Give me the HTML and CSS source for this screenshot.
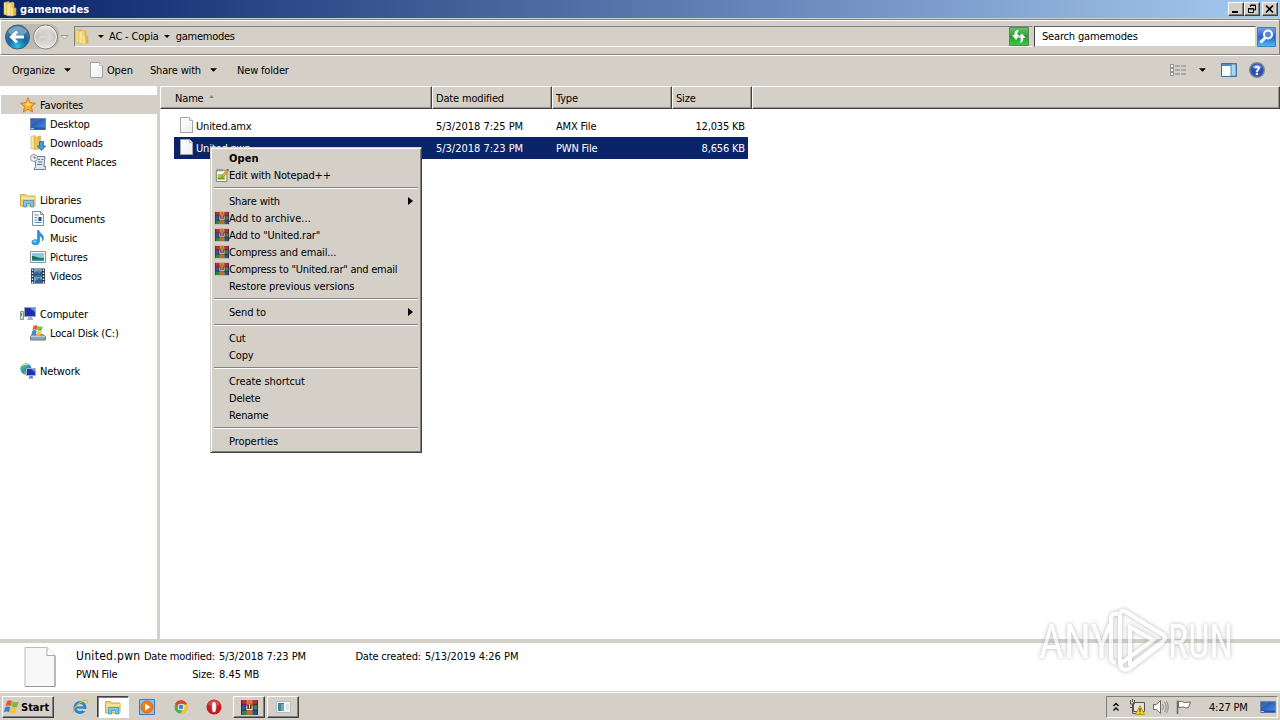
FILE: index.html
```html
<!DOCTYPE html>
<html lang="en">
<head>
  <meta charset="UTF-8">
  <meta name="viewport" content="width=device-width, initial-scale=1.0">
  <title>gamemodes</title>
  <link rel="stylesheet" href="styles.css">
</head>
<body>
  <svg class="sprites" width="0" height="0">
    <defs>
      <linearGradient id="gold" x1="0" x2="1"><stop offset="0" stop-color="#fff3a8"/><stop offset="1" stop-color="#d9ad35"/></linearGradient>
      <linearGradient id="screen" x1="0" y1="0" x2="1" y2="1"><stop offset="0" stop-color="#173f9c"/><stop offset="1" stop-color="#4a95e6"/></linearGradient>
      <linearGradient id="paper" x1="0" y1="0" x2="1" y2="1"><stop offset="0" stop-color="#fff"/><stop offset="1" stop-color="#eee"/></linearGradient>
      <radialGradient id="back" cx=".5" cy=".9" r=".8"><stop offset="0" stop-color="#2fc3ec"/><stop offset=".5" stop-color="#1268a6"/><stop offset="1" stop-color="#4a7ca5"/></radialGradient>
      <linearGradient id="forward" x1="0" y1="0" x2="0" y2="1"><stop offset="0" stop-color="#e9e7e3"/><stop offset=".5" stop-color="#c6c3be"/><stop offset="1" stop-color="#ebe9e6"/></linearGradient>
      <linearGradient id="green" x1="0" y1="0" x2="0" y2="1"><stop offset="0" stop-color="#6cc46c"/><stop offset=".5" stop-color="#2b9a35"/><stop offset="1" stop-color="#37ce3c"/></linearGradient>
      <linearGradient id="blue" x1="0" y1="0" x2="0" y2="1"><stop offset="0" stop-color="#7d9de8"/><stop offset=".5" stop-color="#2b62c9"/><stop offset="1" stop-color="#45c2f5"/></linearGradient>
    </defs>
    <symbol id="i-folder" viewBox="0 0 16 16">
      <path d="M2 1.500l5-1v14l-5-1z" fill="url(#gold)" stroke="#c9a640" stroke-width=".6"/>
      <path d="M5 2.500l6-1.500 1 1v5h2v7l-4 1-5-.5z" fill="url(#gold)" stroke="#d5b04a" stroke-width=".6"/>
      <path d="M10 7v8" stroke="#fff6c0"/>
    </symbol>
    <symbol id="i-file" viewBox="0 0 16 16">
      <path d="M2.500.5h9l3 3v12h-12z" fill="url(#paper)" stroke="#a3a3a3"/>
      <path d="M11.500.5v3h3" fill="#fff" stroke="#b5b5b5"/>
    </symbol>
    <symbol id="i-star" viewBox="0 0 16 16">
      <path d="M8 .8l2.100 4.900 5.300.5-4 3.500 1.200 5.300L8 12.200 3.400 15l1.200-5.300-4-3.500 5.300-.5z" fill="#ffb52e" stroke="#d9771b"/>
      <path d="M8 3.500l1.200 3.200 3 .3-4.200 1.500-3.500-1.400 2.500-.4z" fill="#ffe58e"/>
    </symbol>
    <symbol id="i-desktop" viewBox="0 0 16 16">
      <path d="M.5 2.500h15v11H.5z" fill="url(#screen)" stroke="#6d87ad"/>
      <path d="M1 11.500h14v2H1z" fill="#24539f"/><path d="M1 12h3v1H1z" fill="#9ed2f4"/>
      <path d="M1 3l9 0-9 6z" fill="#fff" opacity=".12"/>
    </symbol>
    <symbol id="i-downloads" viewBox="0 0 16 16">
      <path d="M1 1.500l4-1v14l-4-1zM4.500 2.500l6-1.500v13l-6 .5z" fill="url(#gold)" stroke="#cda83f" stroke-width=".6"/>
      <path d="M9.500 6.500h4V11h2.200l-4.200 4.500L7.300 11h2.200z" fill="#3e9de0" stroke="#1c65aa" stroke-width=".8"/>
    </symbol>
    <symbol id="i-recent" viewBox="0 0 16 16">
      <path d="M5.500 2.500h9.500l-1 10h1.500v3H4l1.500-3z" fill="#dfe7ec" stroke="#6f8290"/>
      <path d="M8 5.500h2M11.500 5.500h2M8 8h4.500M7 10.500h5" stroke="#56799a"/>
      <circle cx="4" cy="4" r="3.500" fill="#f4f6f7" stroke="#8c979f"/><path d="M4 2v2h2" fill="none" stroke="#52708c"/>
    </symbol>
    <symbol id="i-libraries" viewBox="0 0 16 16">
      <path d="M.5 2.500h5l1 1.500h8.500v10H.5z" fill="#f3d672" stroke="#cda948"/>
      <path d="M1 6h14" stroke="#fff3b7"/>
      <path d="M3.500 15V8.500h10V15h-3v-3.500h-4V15z" fill="#7cc7eb" stroke="#3d91c5" stroke-width=".8"/>
    </symbol>
    <symbol id="i-documents" viewBox="0 0 16 16">
      <path d="M2.500.5h8l3 3v11h-11z" fill="#f7fafc" stroke="#7e8f9c"/><path d="M10.500.5v3h3" fill="none" stroke="#7e8f9c"/>
      <path d="M4.500 4h4M4.500 6.500h3M4.500 9h3M4.500 11.500h7" stroke="#6390bf"/><path d="M8.500 6h3v4h-3z" fill="#264f8a"/>
    </symbol>
    <symbol id="i-music" viewBox="0 0 16 16">
      <path d="M7.500 12V.5h1.500c.5 3 4 3.500 4.500 7 .2 1.500-.5 3-1 3.500.3-3-1-4.500-3-5V12z" fill="#3390d5" stroke="#1a6cae" stroke-width=".5"/>
      <ellipse cx="5.500" cy="12.300" rx="3.900" ry="3" fill="#329bdf"/><ellipse cx="4.800" cy="11.500" rx="1.800" ry="1" fill="#87d1f4"/>
    </symbol>
    <symbol id="i-pictures" viewBox="0 0 16 16">
      <path d="M.5 2.500h15v11H.5z" fill="#fff" stroke="#8996a0"/><path d="M2 4h12v8H2z" fill="#83c9ed"/>
      <path d="M2 7c4 0 6 2.500 12 2v3H2z" fill="#246c58"/><path d="M2 10.500h12V12H2z" fill="#3b97b4"/>
    </symbol>
    <symbol id="i-videos" viewBox="0 0 16 16">
      <path d="M1 .5h14v15H1z" fill="#263542"/><path d="M4 1h8v6.500H4zM4 8.500h8V15H4z" fill="#5eaade"/>
      <path d="M4 5l3-2 2 2 3-2v4.500H4zM5 13l4-3 3 2v3H5z" fill="#315f93"/><path d="M8 2h2v2H8zM6 10h2v2H6z" fill="#b5684c"/>
      <path d="M2.500 1.500v14M13.500 1.500v14" stroke="#fff" stroke-width="1.400" stroke-dasharray="1.500 1.500"/>
    </symbol>
    <symbol id="i-computer" viewBox="0 0 16 16">
      <path d="M.5 5.500h3v8h-3z" fill="#dbe4d8" stroke="#849181"/><path d="M1.500 7v3" stroke="#49a343"/>
      <path d="M4.500 1.500h11v9h-11z" fill="#1b2fb0" stroke="#98a7ba"/><path d="M10 2h5v4z" fill="#6f8df1"/>
      <path d="M8.500 11h3.500l1.500 3H7z" fill="#a7b1bc"/>
    </symbol>
    <symbol id="i-disk" viewBox="0 0 16 16">
      <path d="M2.500 9.500h10l3 2v3.500H.5v-3.500z" fill="#8ba7b5" stroke="#617986"/><path d="M1 11.500h14" stroke="#b9cfda"/><path d="M11 13.500h3" stroke="#64d34b"/>
      <path d="M3.500 1q2.200-1.500 4.400 0l-1 4q-2-1-4.400 0z" fill="#e8592b"/><path d="M8.300 1.300q2 1 4.400 0l-1 4q-2 1-4.400 0z" fill="#78b83b"/>
      <path d="M2.300 5.700q2-1.200 4.400 0l-1 4q-2-1-4.400 0z" fill="#3f89d4"/><path d="M7.100 6q2 1 4.400 0l-1 4q-2 1-4.400 0z" fill="#f6c337"/>
    </symbol>
    <symbol id="i-network" viewBox="0 0 16 16">
      <circle cx="6" cy="6" r="5.500" fill="#2e8ed0"/><path d="M2 2.500C4 0 7 0 8 1L6.500 4 3 6 1 8C0 6 .500 4 2 2.500zM4 8l3 0v3.500L4 11z" fill="#54b65a"/><path d="M2 3q3-3 6-1" stroke="#c2eef5" fill="none"/>
      <path d="M6.500 5.500h9v7h-9z" fill="#1b35b8" stroke="#a5b2c1"/><path d="M11 6h4v3z" fill="#718cf0"/><path d="M9.500 13h3l1 2.500h-5z" fill="#6d7bc8"/>
    </symbol>
    <symbol id="i-rar" viewBox="0 0 16 16" preserveAspectRatio="none">
      <path d="M0 1h16v4.700H0z" fill="#b42c3c"/><path d="M0 5.700h16v4.600H0z" fill="#3156b4"/><path d="M0 10.300h16V15H0z" fill="#218a45"/>
      <path d="M11 5.700h5v4.600h-5z" fill="#2b9355"/><path d="M11 10.300h5V15h-5z" fill="#284ea3"/>
      <path d="M0 5.500h16M0 10.500h16M.5 1v14M15.500 1v14" stroke="#3b2534" stroke-width=".8"/>
      <path d="M5 1h6v14H5z" fill="#c06a30"/><path d="M4 5.500h8v5.500H4z" fill="#572c30"/>
      <path d="M5.500 6v4h5V6M8 5v4" stroke="#eee4d0" fill="none"/><path d="M6.500 1v3M9.500 1v3" stroke="#ed9948"/>
    </symbol>
    <symbol id="i-notepad" viewBox="0 0 16 16">
      <path d="M1.500 2.500h10l2 2v11h-12z" fill="#f8faf4" stroke="#6f746b"/><path d="M3 7h8v6H3z" fill="#a4d445"/><path d="M3 11h8v2H3z" fill="#65a62e"/>
      <path d="M3 1v3M5.500 1v3M8 1v3" stroke="#777"/><path d="M8 9l5-7 2 1.500-5 6.500-2.500 1z" fill="#f2b62b" stroke="#7c5826" stroke-width=".6"/><path d="M13 1.500h2.500v2z" fill="#333"/>
    </symbol>
    <symbol id="i-down" viewBox="0 0 8 4"><path d="M0 0h8L4 4z"/></symbol>
    <symbol id="i-right" viewBox="0 0 5 8"><path d="M0 0l5 4-5 4z"/></symbol>
    <symbol id="i-windows" viewBox="0 0 18 16">
      <path d="M4 2.200Q6.500.5 9 2L7.700 7Q5 5.800 2.500 7z" fill="#e65a29"/><path d="M9.700 2.400q2.600 1.400 6 .2L14.200 8q-3 1-5.700-.5z" fill="#7cb83c"/>
      <path d="M2.200 8.200Q4.800 6.800 7.400 8.200L6 13.200Q3.500 12 .8 13.300z" fill="#3d80d1"/><path d="M8.100 8.500q2.700 1.300 5.800.300L12.500 14q-3 1-5.800-.500z" fill="#f7c431"/>
    </symbol>
  </svg>

  <div class="titlebar">
    <svg class="icon"><use href="#i-folder"/></svg>
    <span class="title">gamemodes</span>
    <div class="win-button"><svg width="12" height="10"><path d="M2 8h6" stroke="#000" stroke-width="2"/></svg></div>
    <div class="win-button"><svg width="12" height="10"><path d="M4.500 3V1h5v5H7.500M4 1.500h6M2.500 4.500h5v4h-5zM2 5h6" fill="none" stroke="#000"/></svg></div>
    <div class="win-button close"><svg width="12" height="10"><path d="M2 1.500l7 7M9 1.500l-7 7" stroke="#000" stroke-width="1.600"/></svg></div>
  </div>

  <div class="navbar">
    <svg class="travel" width="70" height="28" viewBox="0 0 70 28">
      <path d="M15 1h31q7 0 10 7v11q-3 6-10 7H15z" fill="#bdb9b3"/>
      <circle cx="14.500" cy="14" r="12" fill="url(#back)" stroke="#3d5f7b"/>
      <path d="M5 8Q14-1 24 8q-2 5-10 5T5 8z" fill="#fff" opacity=".3"/>
      <path d="M21 14H9M14 8.500L8.500 14l5.500 5.500" fill="none" stroke="#fff" stroke-width="3"/>
      <circle cx="42.500" cy="14" r="12" fill="url(#forward)" stroke="#85827f"/><circle cx="42.500" cy="14" r="10.800" fill="none" stroke="#f1f0ee"/>
      <path d="M36 14h12M43 8.500l5.500 5.500-5.500 5.500" fill="none" stroke="#d9d7d3" stroke-width="3"/>
      <path d="M58 12.500h7L61.500 16z" fill="#f4f3f1" stroke="#8b8883" stroke-width=".8"/>
    </svg>
    <div class="address">
      <svg class="icon"><use href="#i-folder"/></svg>
      <svg class="crumb-arrow first"><use href="#i-down"/></svg>
      <span class="crumb">AC - Copia</span>
      <svg class="crumb-arrow"><use href="#i-down"/></svg>
      <span class="crumb last">gamemodes</span>
      <svg class="arrow"><use href="#i-down"/></svg>
    </div>
    <svg class="refresh" width="20" height="19"><path d="M.5.500h19v18H.5z" fill="url(#green)" stroke="#55875a"/><path d="M10 3Q5 3 5.500 8H3l4 5 4-5H8.500Q8 5 10 3z" fill="#fff"/><path d="M10 16q5 0 4.500-5H17l-4-5-4 5h2.500q.5 3-1.500 5z" fill="#fff" stroke="#2f9c38" stroke-width=".5"/></svg>
    <div class="search"><span>Search gamemodes</span></div>
    <svg class="find" width="19" height="20"><path d="M.500.500h18v19H.5z" fill="url(#blue)" stroke="#4b79bf"/><circle cx="11" cy="7.500" r="4" fill="#528ae0" stroke="#fff" stroke-width="2"/><path d="M8 11l-4.500 4.500" stroke="#fff" stroke-width="3"/></svg>
  </div>

  <div class="toolbar">
    <span class="t-organize">Organize</span><svg class="arrow"><use href="#i-down"/></svg>
    <svg class="icon t-file"><use href="#i-file"/></svg><span class="t-open">Open</span>
    <span class="t-share">Share with</span><svg class="arrow"><use href="#i-down"/></svg>
    <span class="t-new">New folder</span>
    <div class="toolbar-right">
      <svg width="16" height="12"><path d="M.5.500h3v3h-3zM.5 4.500h3v3h-3zM.5 8.500h3v3h-3z" fill="#fff" stroke="#8a8a8a"/><path d="M5 2h5M11 2h5M5 6h5M11 6h5M5 10h5M11 10h5" stroke="#7d838c"/></svg>
      <svg class="arrow"><use href="#i-down"/></svg>
      <svg width="16" height="14"><path d="M.5.500h15v13H.5z" fill="#fff" stroke="#3f6c95"/><path d="M1 2h9" stroke="#5689b5" stroke-width="2"/><path d="M10 1h5v12h-5z" fill="#a9d8ef" stroke="#4c87b3"/></svg>
      <svg width="16" height="16"><circle cx="8" cy="8" r="7.300" fill="#2c50b0" stroke="#7d879b" stroke-width="1.400"/><path d="M3 5q5-5 10 0-4 4-10 0" fill="#839ddd"/><text class="help" x="8" y="12.500" text-anchor="middle">?</text></svg>
    </div>
  </div>

  <div class="main">
    <div class="sidebar">
      <div class="node root selected"><svg class="icon"><use href="#i-star"/></svg><span>Favorites</span></div>
      <div class="node"><svg class="icon"><use href="#i-desktop"/></svg><span>Desktop</span></div>
      <div class="node"><svg class="icon"><use href="#i-downloads"/></svg><span>Downloads</span></div>
      <div class="node"><svg class="icon"><use href="#i-recent"/></svg><span>Recent Places</span></div>
      <div class="node root group"><svg class="icon"><use href="#i-libraries"/></svg><span>Libraries</span></div>
      <div class="node"><svg class="icon"><use href="#i-documents"/></svg><span>Documents</span></div>
      <div class="node"><svg class="icon"><use href="#i-music"/></svg><span>Music</span></div>
      <div class="node"><svg class="icon"><use href="#i-pictures"/></svg><span>Pictures</span></div>
      <div class="node"><svg class="icon"><use href="#i-videos"/></svg><span>Videos</span></div>
      <div class="node root group"><svg class="icon"><use href="#i-computer"/></svg><span>Computer</span></div>
      <div class="node"><svg class="icon"><use href="#i-disk"/></svg><span>Local Disk (C:)</span></div>
      <div class="node root group"><svg class="icon"><use href="#i-network"/></svg><span>Network</span></div>
    </div>
    <div class="files">
      <div class="header">
        <div class="th name">Name<svg width="5" height="3"><path d="M2.500 0L5 3H0z" fill="#888"/></svg></div>
        <div class="th">Date modified</div>
        <div class="th">Type</div>
        <div class="th">Size</div>
        <div class="th"></div>
      </div>
      <div class="row">
        <svg class="icon"><use href="#i-file"/></svg><span class="name">United.amx</span><span class="date">5/3/2018 7:25 PM</span><span class="type">AMX File</span><span class="size">12,035 KB</span>
      </div>
      <div class="row selected">
        <svg class="icon"><use href="#i-file"/></svg><span class="name">United.pwn</span><span class="date">5/3/2018 7:23 PM</span><span class="type">PWN File</span><span class="size">8,656 KB</span>
      </div>
    </div>
  </div>

  <div class="details">
    <svg width="32" height="40" viewBox="0 0 32 40"><path d="M1 .500h22l8 8v31H1z" fill="#f8f8f8" stroke="#bbb"/><path d="M23 .500v8h8" fill="#fff" stroke="#aaa"/><path d="M1 39.500h30V9" fill="none" stroke="#999"/></svg>
    <div class="details-grid">
      <span class="filename">United.pwn</span><span class="label">Date modified:</span><span class="value">5/3/2018 7:23 PM</span><span class="label">Date created:</span><span class="value">5/13/2019 4:26 PM</span>
      <span class="filetype">PWN File</span><span class="label">Size:</span><span class="value">8.45 MB</span>
    </div>
  </div>

  <div class="taskbar">
    <div class="start"><svg width="18" height="16"><use href="#i-windows"/></svg><span>Start</span></div>
    <div class="task ie"><svg width="16" height="16"><circle cx="8" cy="8.500" r="5" fill="none" stroke="#2586d5" stroke-width="3"/><path d="M4 8.500h10" stroke="#2586d5" stroke-width="2.200"/><path d="M11 10h4v2h-4z" fill="#d4d0c8"/><path d="M1.500 14C-1 11 11-1 15 1.500q1 1-.5 3.500" stroke="#e6b836" stroke-width="1.200" fill="none"/></svg></div>
    <div class="task active"><svg class="icon"><use href="#i-libraries"/></svg></div>
    <div class="task wmp"><svg width="16" height="16"><path d="M.5.500h15v15H.5z" fill="#8fc3ea" stroke="#3a7fbd"/><circle cx="8" cy="8" r="6" fill="#ef7c19" stroke="#d8691a"/><path d="M6 4.500l5.500 3.500L6 11.500z" fill="#fff"/></svg></div>
    <div class="task chrome"><svg width="14" height="14" viewBox="0 0 16 16"><circle cx="8" cy="8" r="7.500" fill="#4caf50"/><path d="M1.500 4.200A7.500 7.500 0 0 1 15 5H8L5 10z" fill="#e04335"/><path d="M15 5a7.500 7.500 0 0 1-7.500 10.500L11 9.500 8.500 5z" fill="#fac62e"/><circle cx="8" cy="8" r="3.700" fill="#fff"/><circle cx="8" cy="8" r="2.800" fill="#4285db"/></svg></div>
    <div class="task opera"><svg width="16" height="16"><circle cx="8" cy="8" r="7.500" fill="#c41c22"/><path d="M2 6q0-5 6-5t6 5q-6 2-12 0z" fill="#e2615e" opacity=".6"/><ellipse cx="8" cy="8" rx="2.300" ry="5.300" fill="#e8e0e0"/><ellipse cx="8" cy="8" rx="1" ry="4.500" fill="#fff"/></svg></div>
    <div class="task raised"><svg width="17" height="17"><use href="#i-rar"/></svg></div>
    <div class="task raised"><svg width="15" height="12"><path d="M.5.500h14v11H.5z" fill="#f4f6f6" stroke="#b6bcc0"/><path d="M2 2h6v8H2z" fill="#3b8490"/><path d="M5 3h3v7H5z" fill="#76a9b2"/><path d="M10 3h3v6h-3z" fill="#dce4e5"/></svg></div>
    <div class="tray">
      <svg width="6" height="10"><path d="M.5 4L3 1.500 5.500 4M.5 8.500L3 6l2.500 2.500" fill="none" stroke="#000" stroke-width="1.300"/></svg>
      <svg class="net" width="16" height="16"><path d="M4.500 3.500h11v9h-11z" fill="#e3e3e3" stroke="#555"/><path d="M1.500 1v4h4V1M3.500 0v3M3.500 5v9.500H9M1 8.500h3" fill="none" stroke="#555"/><path d="M11 6.500l4.500 9h-9z" fill="#ffd91a" stroke="#aa8b16" stroke-width=".8"/><path d="M11 9v4M11 13.800v1" stroke="#222"/></svg>
      <svg class="sound" width="17" height="16"><path d="M1.500 5.500h3l4-4v13l-4-4h-3z" fill="#fff" stroke="#666"/><path d="M10.500 5q2 3 0 6M12.500 3q3.500 5 0 10M14.500 2q3.500 6 0 12" fill="none" stroke="#777" stroke-width=".8"/></svg>
      <svg class="flag" width="16" height="16"><path d="M1.500 15V1.500" stroke="#666" stroke-width="1.500"/><path d="M2.500 2.500q3-1 6 1l6-.5-2 5.500q-3 1-5-.5l-5 .5z" fill="#fff" stroke="#666"/></svg>
      <span class="clock">4:27 PM</span>
      <svg class="icon"><use href="#i-desktop"/></svg>
    </div>
  </div>

  <div class="menu">
    <div class="item default">Open</div>
    <div class="item"><svg class="icon"><use href="#i-notepad"/></svg>Edit with Notepad++</div>
    <div class="sep"></div>
    <div class="item">Share with<svg class="more"><use href="#i-right"/></svg></div>
    <div class="item dots"><svg class="icon"><use href="#i-rar"/></svg>Add to archive...</div>
    <div class="item"><svg class="icon"><use href="#i-rar"/></svg>Add to "United.rar"</div>
    <div class="item"><svg class="icon"><use href="#i-rar"/></svg>Compress and email...</div>
    <div class="item narrow"><svg class="icon"><use href="#i-rar"/></svg>Compress to "United.rar" and email</div>
    <div class="item wide">Restore previous versions</div>
    <div class="sep"></div>
    <div class="item">Send to<svg class="more"><use href="#i-right"/></svg></div>
    <div class="sep"></div>
    <div class="item">Cut</div>
    <div class="item">Copy</div>
    <div class="sep"></div>
    <div class="item wide">Create shortcut</div>
    <div class="item">Delete</div>
    <div class="item">Rename</div>
    <div class="sep"></div>
    <div class="item wide">Properties</div>
  </div>

  <svg class="watermark" width="240" height="90" viewBox="0 0 240 90">
    <g class="watermark-text">
      <text x="7" y="54" textLength="74" lengthAdjust="spacingAndGlyphs">ANY</text>
      <text x="136" y="54" textLength="65" lengthAdjust="spacingAndGlyphs">RUN</text>
    </g>
    <g class="watermark-logo">
      <path d="M86 10q-7-1-7 5v38q0 5 5 6"/>
      <path d="M88 61V12q0-7 6-4l36 22q6 4 0 8L98 62"/>
      <path d="M98 62V23l23 13-33 24q2 8 9 5l34-26"/>
    </g>
  </svg>
</body>
</html>
```
FILE: styles.css
```css
* {
  box-sizing: border-box;
}

body {
  margin: 0;
  width: 1280px;
  height: 720px;
  overflow: hidden;
  display: flex;
  flex-direction: column;
  position: relative;
  background-color: #d4d0c8;
  color: #000;
  font-family: "DejaVu Sans Condensed", "DejaVu Sans", sans-serif;
  font-stretch: condensed;
  font-size: 11px;
  letter-spacing: -0.17px;
  line-height: 15px;
  white-space: nowrap;
}

svg {
  display: block;
  flex: none;
}

.sprites {
  position: absolute;
}

.icon {
  width: 16px;
  height: 16px;
}

.arrow {
  width: 7px;
  height: 4px;
}

.titlebar {
  display: flex;
  align-items: center;
  height: 18px;
  flex: none;
  padding: 0 2px;
  background: linear-gradient(to right, #0a246a, #a6caf0);
}

.title {
  flex: 1;
  margin-left: 2px;
  color: #fff;
  font-weight: bold;
  letter-spacing: 0.2px;
}

.win-button {
  width: 16px;
  height: 14px;
  padding: 1px;
  background-color: #d4d0c8;
  border: 1px solid;
  border-color: #fff #404040 #404040 #fff;
  box-shadow: inset -1px -1px #808080;
}

.win-button.close {
  margin-left: 2px;
}

.navbar {
  display: flex;
  align-items: center;
  height: 36px;
  flex: none;
  margin-top: 1px;
  padding: 0 2px 1px;
  border: 1px solid;
  border-color: #808080 #808080 #808080 #fff;
  box-shadow: inset 0 1px #fff, 0 1px #fff;
}

.address {
  display: flex;
  align-items: center;
  width: 959px;
  height: 21px;
  margin-left: 1px;
  padding-right: 29px;
  border: 1px solid;
  border-color: #808080 #d4d0c8 #fff #808080;
}

.address .icon {
  margin-left: -1px;
}

.address .arrow {
  margin-left: auto;
  margin-right: -14px;
}

.crumb-arrow {
  width: 6px;
  height: 3px;
  margin: 0 5px 0 5px;
}

.crumb-arrow.first {
  margin: 0 5px 0 8px;
}

.crumb.last {
  margin-left: 1px;
  letter-spacing: -0.25px;
}

.refresh {
  margin-left: -24px;
}

.search {
  width: 222px;
  height: 21px;
  margin-left: 5px;
  padding: 2px 7px;
  background-color: #fff;
  border: 1px solid;
  border-color: #606060 #d4d0c8 #d4d0c8 #404040;
}

.find {
  margin-left: 1px;
}

.toolbar {
  display: flex;
  align-items: center;
  height: 31px;
  flex: none;
  padding: 0 15px 1px 12px;
}

.t-organize {
  width: 52px;
}

.t-file {
  margin-left: 17px;
}

.t-open {
  width: 43px;
  margin-left: 3px;
}

.t-share {
  width: 60px;
}

.t-new {
  margin-left: 20px;
}

.toolbar-right {
  display: flex;
  align-items: center;
  margin-left: auto;
}

.toolbar-right .arrow {
  margin: 0 15px 0 13px;
}

.toolbar-right svg:last-child {
  margin-left: 12px;
}

.help {
  fill: #fff;
  font-weight: bold;
  font-size: 12px;
}

.main {
  display: flex;
  height: 553px;
  flex: none;
}

.sidebar {
  width: 160px;
  padding: 9px 0 0 1px;
  background-color: #fff;
  border-right: 3px solid #d4d0c8;
}

.node {
  display: flex;
  align-items: center;
  height: 19px;
  padding-left: 29px;
}

.node span {
  margin-left: 4px;
  padding-top: 1px;
}

.node.root {
  padding-left: 19px;
}

.node.group {
  margin-top: 19px;
}

.node.selected {
  background-color: #d4d0c8;
}

.files {
  flex: 1;
  background-color: #fff;
}

.header {
  display: grid;
  grid-template-columns: 272px 120px 120px 80px 1fr;
  height: 23px;
  margin-bottom: 6px;
  background-color: #d4d0c8;
}

.th {
  display: flex;
  align-items: center;
  padding-left: 3px;
  padding-top: 2px;
  border: 1px solid;
  border-color: #fff #404040 #404040 #fff;
  box-shadow: inset -1px -1px #9a968f;
}

.th.name {
  padding-left: 14px;
}

.th svg {
  margin: -5px 0 0 5px;
}

.row {
  display: flex;
  align-items: center;
  width: 574px;
  height: 22px;
  margin-left: 14px;
  padding: 0 3px 0 4px;
}

.row .icon {
  margin-top: -2px;
}

.row.selected {
  background-color: #0a246a;
  color: #fff;
}

.row .name {
  width: 240px;
  margin-left: 2px;
}

.row .date {
  width: 120px;
  letter-spacing: -0.02px;
}

.row .type {
  width: 100px;
}

.row .size {
  flex: 1;
  text-align: right;
}

.details {
  display: flex;
  height: 53px;
  flex: none;
  padding: 4px 24px;
  background-color: #fff;
  border-top: 4px solid #d4d0c8;
}

.details-grid {
  display: grid;
  grid-template-columns: 63px 72px 132px 66px 110px;
  grid-auto-rows: 18px;
  column-gap: 4px;
  align-items: center;
  margin-left: 20px;
}

.filename {
  font-size: 12px;
  letter-spacing: 0.3px;
}

.label {
  text-align: right;
}

.value {
  letter-spacing: -0.02px;
}

.taskbar {
  display: flex;
  height: 28px;
  flex: none;
  padding: 3px 2px 2px;
  border-top: 1px solid #fff;
  box-shadow: 0 -1px #d4d0c8;
}

.start,
.raised {
  border: 1px solid;
  border-color: #fff #404040 #404040 #fff;
  box-shadow: inset -1px -1px #808080;
}

.start {
  display: flex;
  align-items: center;
  width: 52px;
  font-weight: bold;
  letter-spacing: 0;
}

.task {
  display: flex;
  align-items: center;
  justify-content: center;
  width: 32px;
  margin-right: 2px;
}

.task.ie {
  margin-left: 10px;
  margin-right: 1px;
}

.task.active {
  background-color: #fff;
  border: 1px solid;
  border-color: #404040 #fff #fff #404040;
  box-shadow: inset 1px 1px #808080;
}

.task.chrome {
  margin-right: 1px;
}

.task.opera {
  margin-right: 3px;
}

.tray {
  display: flex;
  align-items: center;
  width: 172px;
  margin-left: auto;
  padding: 0 1px 0 6px;
  border: 1px solid;
  border-color: #808080 #fff #fff #808080;
}

.tray .net {
  margin-left: 10px;
}

.tray .sound {
  margin-left: 7px;
}

.tray .flag {
  margin-left: 7px;
}

.clock {
  margin-left: 17px;
  flex: 1;
}

/* context menu */
.menu {
  position: absolute;
  left: 210px;
  top: 147px;
  width: 212px;
  height: 306px;
  padding: 2px;
  background-color: #d4d0c8;
  border: 1px solid;
  border-color: #d4d0c8 #404040 #404040 #d4d0c8;
  box-shadow: inset 1px 1px #fff, inset -1px -1px #808080;
}

.item {
  display: flex;
  align-items: center;
  height: 17px;
  padding-left: 16px;
}

.item.wide {
  letter-spacing: -0.08px;
}

.item.narrow {
  letter-spacing: -0.24px;
}

.item.dots {
  letter-spacing: 0.05px;
}

.item .icon {
  width: 14px;
  height: 14px;
  margin: -2px 0 0 -14px;
}

.item .more {
  width: 5px;
  height: 8px;
  margin-top: -2px;
  margin-left: auto;
  margin-right: 6px;
}

.item.default {
  font-weight: bold;
  letter-spacing: 0.1px;
}

.sep {
  height: 2px;
  margin: 3px 1px 4px;
  border-top: 1px solid #808080;
  border-bottom: 1px solid #fff;
}

.watermark {
  position: absolute;
  left: 1032px;
  top: 604px;
  opacity: 0.7;
  filter: drop-shadow(0 0 2px #999);
}

.watermark-text {
  fill: #fff;
  font-family: Roboto, sans-serif;
  font-size: 49px;
  letter-spacing: 0;
}

.watermark-logo {
  fill: none;
  stroke: #fff;
  stroke-width: 4;
}
```
